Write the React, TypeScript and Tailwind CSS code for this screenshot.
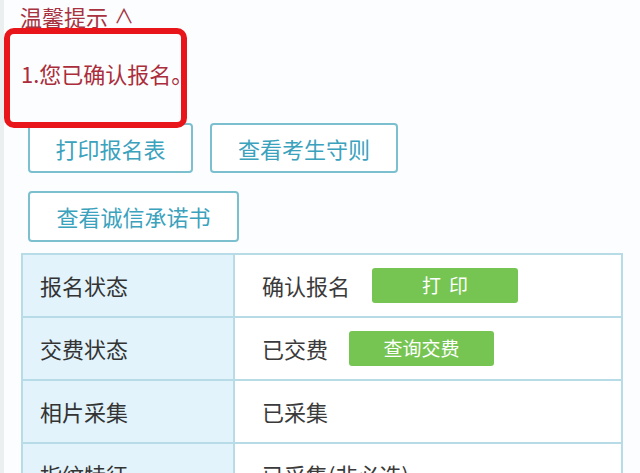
import React from "react";

const font = { fontFamily: '"Noto Sans CJK SC", "Noto Sans", sans-serif' };

function OutlineBtn({ children, w, h }: { children: React.ReactNode; w: string; h: string }) {
  return (
    <div
      className={`${w} ${h} flex items-center justify-center border-2 border-[#7cc0cf] rounded-[4px] bg-white text-[22px] text-[#3ba2bd]`}
    >
      {children}
    </div>
  );
}

function Row({ label, children }: { label: string; children: React.ReactNode }) {
  return (
    <div className="flex h-[63px] border-b-2 border-[#b7dbe7]">
      <div className="w-[212px] shrink-0 bg-[#e2f3fb] border-r-2 border-[#b7dbe7] flex items-center pl-[17px] text-[22px] text-[#333333]">
        {label}
      </div>
      <div className="flex-1 flex items-center pl-[27px] text-[22px] text-[#3a3a3a] bg-white">
        {children}
      </div>
    </div>
  );
}

export default function App() {
  return (
    <div
      className="relative w-[640px] h-[473px] overflow-hidden bg-[#fbfdfe] border-l-4 border-[#eceff0]"
      style={font}
    >
      <div className="pl-[16px] pt-[3px] h-[28px] flex items-center text-[22px] leading-none text-[#a8323f]">
        温馨提示
        <span className="ml-[6px] text-[20px]">∧</span>
      </div>
      <div className="pl-[17px] mt-[33px] h-[24px] flex items-center text-[22px] leading-none text-[#ab2d3c]">
        1.您已确认报名。
      </div>
      <div className="pl-[24px] mt-[38px] flex gap-[17px]">
        <OutlineBtn w="w-[165px]" h="h-[50px]">打印报名表</OutlineBtn>
        <OutlineBtn w="w-[188px]" h="h-[50px]">查看考生守则</OutlineBtn>
      </div>
      <div className="pl-[24px] mt-[18px] flex">
        <OutlineBtn w="w-[211px]" h="h-[51px]">查看诚信承诺书</OutlineBtn>
      </div>
      <div className="ml-[17px] mt-[11px] w-[602px] border-2 border-b-0 border-[#b7dbe7]">
        <Row label="报名状态">
          确认报名
          <div className="ml-[22px] w-[146px] h-[35px] rounded-[3px] bg-[#76c552] text-white text-[19px] flex items-center justify-center gap-[8px]">
            <span>打</span>
            <span>印</span>
          </div>
        </Row>
        <Row label="交费状态">
          已交费
          <div className="ml-[21px] w-[145px] h-[35px] rounded-[3px] bg-[#76c552] text-white text-[19px] flex items-center justify-center">
            查询交费
          </div>
        </Row>
        <Row label="相片采集">已采集</Row>
        <Row label="指纹特征">已采集(非必选)</Row>
      </div>
      <div className="absolute left-0 top-[28px] w-[183px] h-[100px] border-[6px] border-[#e8161b] rounded-[10px]" />
    </div>
  );
}
